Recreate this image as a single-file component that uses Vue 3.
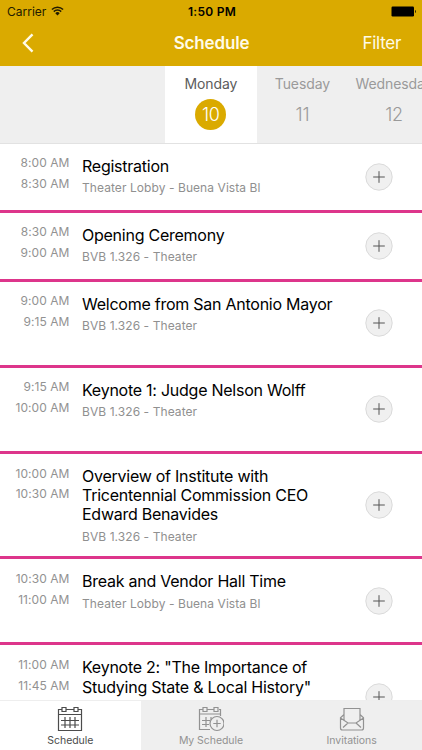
<template>
  <div class="app">
    <header class="header">
      <div class="status">
        <div class="status__carrier">
          <span>Carrier</span>
          <svg class="status__wifi" viewBox="0 0 13 10">
            <path d="M0.9 3.5a8 8 0 0 1 11.2 0M2.8 5.6a5.2 5.2 0 0 1 7.4 0" />
            <path class="solid" d="M4.3 7.2a3.1 3.1 0 0 1 4.4 0L6.5 9.5z" />
          </svg>
        </div>
        <span class="status__time">1:50 PM</span>
        <div class="status__power">
          <svg class="status__battery" viewBox="0 0 26 11">
            <rect x="0.5" y="0.5" width="22.5" height="10" rx="1.2" />
            <path d="M24 4c1.1 0.3 1.1 2.7 0 3z" />
          </svg>
        </div>
      </div>
      <nav class="nav">
        <button class="nav__back" aria-label="Back">
          <svg viewBox="0 0 12 20"><path d="M10.5 1.3L2 10l8.5 8.7" /></svg>
        </button>
        <h1 class="nav__title">Schedule</h1>
        <button class="nav__filter">Filter</button>
      </nav>
    </header>

    <div class="days">
      <button
        v-for="day in days"
        :key="day.date"
        class="day"
        :class="{ 'day--active': day.date === selectedDate }"
        @click="selectedDate = day.date"
      >
        <span class="day__name">{{ day.name }}</span>
        <span class="day__date">{{ day.date }}</span>
      </button>
    </div>

    <main class="list">
      <section v-for="item in sessions" :key="item.start" class="session">
        <div class="session__time">
          <span>{{ item.start }}</span>
          <span>{{ item.end }}</span>
        </div>
        <div class="session__info" :class="item.size && `session__info--${item.size}`">
          <h2 class="session__title">
            <span v-for="line in item.title" :key="line">{{ line }}</span>
          </h2>
          <p v-if="item.place" class="session__place">{{ item.place }}</p>
        </div>
        <button class="session__add" aria-label="Add">
          <svg viewBox="0 0 28 28">
            <circle cx="14" cy="14" r="13.2" />
            <path d="M14 8.2v11.6M8.2 14h11.6" />
          </svg>
        </button>
      </section>
    </main>

    <footer class="tabs">
      <button class="tab tab--active">
        <svg class="tab__icon" viewBox="0 0 26 26">
          <path d="M5 3.5H1.5v21h23v-21H21M9 3.5h8M1.5 8.5h23M5 1.5h4v4H5zM17 1.5h4v4h-4zM8 11v11M13 11v11M18 11v11M4 14.5h18M4 19h18" />
        </svg>
        <span>Schedule</span>
      </button>
      <button class="tab">
        <svg class="tab__icon" viewBox="0 0 26 26">
          <path d="M5 3.5H1.5v20H12M21 3.5h1.5V10M9 3.5h7M1.5 8h21M5 1.5h4v4H5zM16 1.5h4v4h-4zM8 11v10M13 11v3M4 14.5h8M4 18.5h7" />
          <circle cx="19" cy="17.5" r="7" />
          <path d="M19 13.8v7.4M15.3 17.5h7.4" />
        </svg>
        <span>My Schedule</span>
      </button>
      <button class="tab">
        <svg class="tab__icon" viewBox="0 0 26 26">
          <path d="M5 14V2.5h16V14M5 8.5l-3.5 3.2V22a2 2 0 0 0 2 2h19a2 2 0 0 0 2-2V11.7L21 8.5M1.5 12l7.5 5h8l7.5-5M9 17l-5 4.5M17 17l5 4.5" />
        </svg>
        <span>Invitations</span>
      </button>
    </footer>
  </div>
</template>

<script setup>
import { ref } from "vue";

const selectedDate = ref(10);

const days = [
  { name: "Monday", date: 10 },
  { name: "Tuesday", date: 11 },
  { name: "Wednesday", date: 12 },
];

// title is split by line, size changes the space under the place
const sessions = [
  { start: "8:00 AM", end: "8:30 AM", title: ["Registration"], place: "Theater Lobby - Buena Vista Bl" },
  { start: "8:30 AM", end: "9:00 AM", title: ["Opening Ceremony"], place: "BVB 1.326 - Theater" },
  { start: "9:00 AM", end: "9:15 AM", title: ["Welcome from San Antonio Mayor"], place: "BVB 1.326 - Theater", size: "tall" },
  { start: "9:15 AM", end: "10:00 AM", title: ["Keynote 1: Judge Nelson Wolff"], place: "BVB 1.326 - Theater", size: "tall" },
  {
    start: "10:00 AM",
    end: "10:30 AM",
    title: ["Overview of Institute with", "Tricentennial Commission CEO", "Edward Benavides"],
    place: "BVB 1.326 - Theater",
    size: "tight",
  },
  { start: "10:30 AM", end: "11:00 AM", title: ["Break and Vendor Hall Time"], place: "Theater Lobby - Buena Vista Bl", size: "tall" },
  {
    start: "11:00 AM",
    end: "11:45 AM",
    title: ["Keynote 2: \"The Importance of", "Studying State & Local History\""],
    size: "last",
  },
];
</script>

<style>
body {
  overflow: hidden;
}
</style>

<style scoped>
.app {
  display: flex;
  flex-direction: column;
  height: 750px;
  overflow: hidden;
  background: #fff;
  font-family: Inter, "Liberation Sans", sans-serif;
}

button {
  padding: 0;
  border: 0;
  background: transparent;
  font: inherit;
  cursor: pointer;
}

svg {
  display: block;
  fill: none;
  stroke: currentColor;
}

/* header */
.header {
  flex: 0 0 65.5px;
  background: #daaa00;
}

.status {
  display: grid;
  grid-template-columns: 1fr auto 1fr;
  align-items: center;
  height: 22px;
  padding: 0 5px 0 7px;
  color: #221b00;
  font-size: 12px;
}

.status__carrier {
  display: flex;
  align-items: center;
  gap: 5px;
}

.status__wifi {
  width: 13px;
  height: 10px;
  stroke-width: 1.5;
}

.status__wifi .solid {
  fill: currentColor;
  stroke: none;
}

.status__time {
  color: #000;
  font-weight: 600;
  letter-spacing: 0.25px;
}

.status__power {
  display: flex;
  justify-content: flex-end;
}

.status__battery {
  width: 26px;
  height: 11px;
  color: #000;
  fill: currentColor;
  stroke: none;
}

.nav {
  display: grid;
  grid-template-columns: 1fr auto 1fr;
  align-items: center;
  height: 42px;
  padding: 0 21px 0 22px;
  color: #fffbe8;
}

.nav__back {
  justify-self: start;
  color: inherit;
}

.nav__back svg {
  width: 12px;
  height: 20px;
  stroke-width: 2.4;
}

.nav__title {
  margin: 0;
  font-size: 17px;
  font-weight: 600;
  letter-spacing: -0.15px;
}

.nav__filter {
  justify-self: end;
  color: inherit;
  font-size: 17px;
  letter-spacing: -0.3px;
}

/* day picker */
.days {
  display: flex;
  flex: 0 0 78.2px;
  box-sizing: border-box;
  padding-left: 165px;
  overflow: hidden;
  border-bottom: 1px solid #e2e2e2;
  background: #efefef;
}

.day {
  display: flex;
  flex: 0 0 91.6px;
  flex-direction: column;
  align-items: center;
  padding-top: 8px;
  color: #9a9a9a;
  white-space: nowrap;
}

.day--active {
  background: #fff;
  color: #5c5c5c;
}

.day__name {
  font-size: 14px;
  line-height: 20px;
  letter-spacing: -0.1px;
}

.day__date {
  width: 31px;
  height: 31px;
  margin-top: 5px;
  border-radius: 50%;
  font-size: 18px;
  font-weight: 300;
  line-height: 31px;
  letter-spacing: -0.3px;
}

.day--active .day__date {
  background: #daaa00;
  color: #fff;
}

/* sessions */
.list {
  flex: 1;
  min-height: 0;
  overflow: hidden;
}

.session {
  display: flex;
  align-items: center;
  border-bottom: 3px solid #dd358b;
}

.session__time {
  display: flex;
  flex: 0 0 69.5px;
  flex-direction: column;
  align-self: flex-start;
  padding-top: 9.7px;
  color: #929292;
  font-size: 12px;
  line-height: 20.6px;
  letter-spacing: 0.06px;
  text-align: right;
}

.session__info {
  flex: 1;
  padding: 13px 0 13.5px 12.5px;
}

.session__info--tall {
  padding-bottom: 30.6px;
}

.session__info--tight {
  padding-bottom: 11.5px;
}

.session__info--last {
  padding-bottom: 51px;
}

.session__title {
  margin: 0;
  color: #000;
  font-size: 16px;
  font-weight: 400;
  line-height: 19.3px;
  letter-spacing: -0.25px;
  white-space: nowrap;
}

.session__title span {
  display: block;
}

.session__place {
  margin: 4.2px 0 0;
  color: #909090;
  font-size: 12px;
  line-height: 16px;
  letter-spacing: 0.07px;
}

.session__add {
  flex: 0 0 28px;
  margin-right: 29px;
  color: #555;
}

.session__add svg {
  width: 28px;
  height: 28px;
}

.session__add circle {
  fill: #f0f0f0;
  stroke: #dadada;
}

/* bottom tabs */
.tabs {
  display: grid;
  flex: 0 0 50px;
  grid-template-columns: 1fr 1fr 1fr;
  box-sizing: border-box;
  border-top: 1px solid #eee;
  background: #efefef;
}

.tab {
  display: flex;
  flex-direction: column;
  align-items: center;
  padding-top: 5px;
  color: #929292;
  font-size: 10.5px;
  line-height: 14px;
  letter-spacing: -0.05px;
}

.tab--active {
  background: #fff;
  color: #4c4c4c;
}

.tab__icon {
  width: 26px;
  height: 26px;
  margin-bottom: 2px;
  stroke-width: 1.2;
}
</style>
